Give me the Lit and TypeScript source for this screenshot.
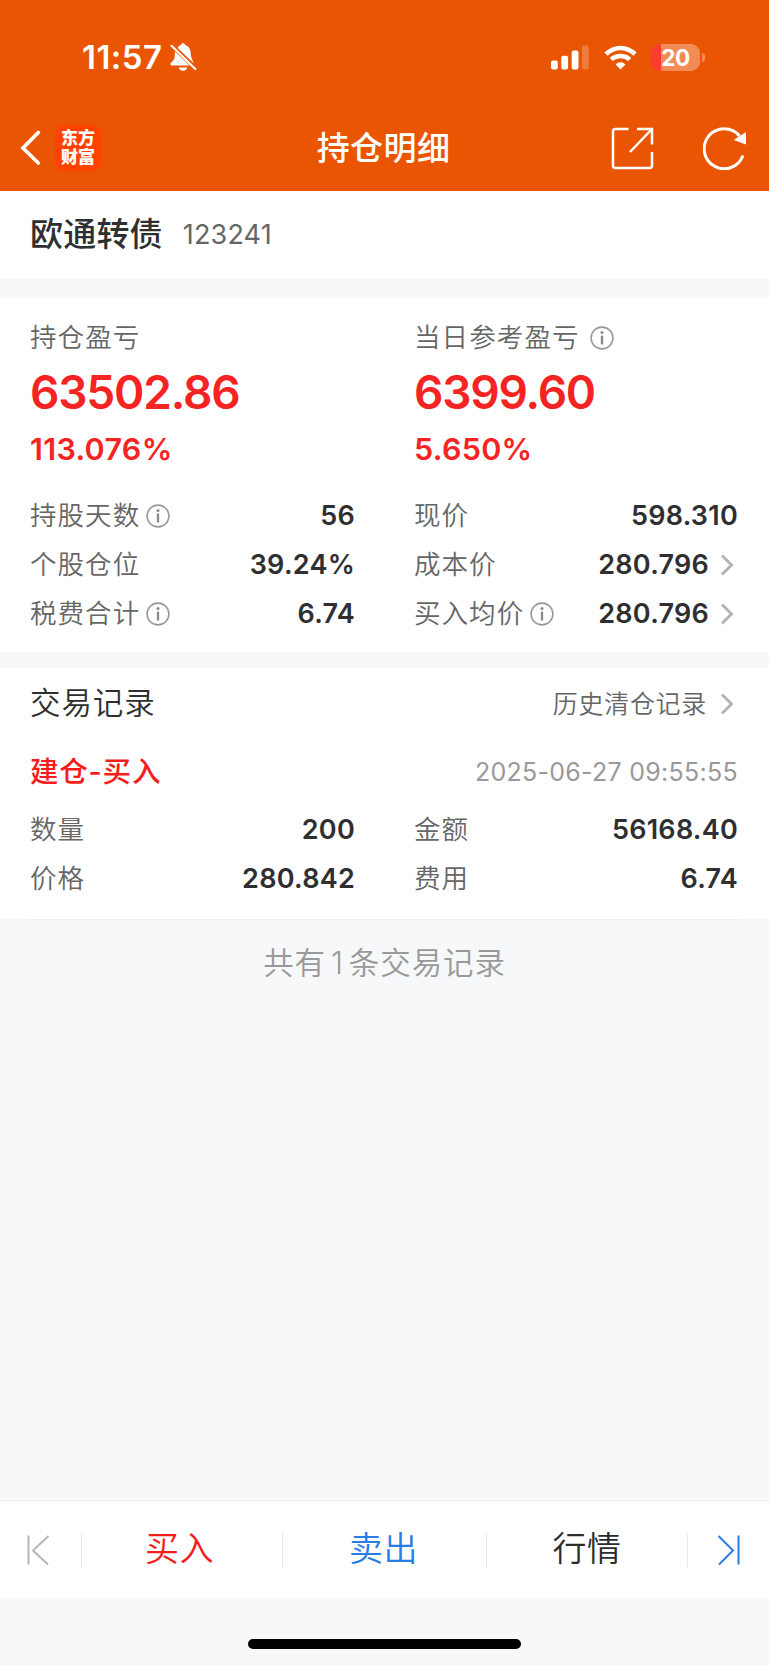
import { LitElement, html, css, svg, nothing } from "lit";
import { customElement, property } from "lit/decorators.js";

const base = css`
  * { box-sizing: border-box; }
  svg { display: block; flex: none; }
`;

@customElement("status-bar")
class StatusBar extends LitElement {
  static styles = [base, css`
    :host { display: flex; align-items: center; height: 76px; padding: 38px 64px 0 82px; justify-content: space-between; color: #fff; }
    .side { display: flex; align-items: center; height: 38px; }
    .time { font-size: 33px; line-height: 38px; font-weight: 600; letter-spacing: 0.450px; width: 88px; white-space: nowrap; }
    .signal { margin-right: 15px; }
    .wifi { margin-right: 14px; }
    .battery { display: flex; align-items: center; }
    .cell { width: 49px; height: 27px; border-radius: 9px; background: linear-gradient(90deg, #ff3b30 10px, #f28b55 10px); font-size: 22.500px; line-height: 27px; font-weight: 700; text-align: center; letter-spacing: -0.300px; }
    .nub { width: 3px; height: 9px; margin-left: 2px; border-radius: 0 4px 4px 0; background: #f28b55; }
  `];
  render() {
    return html`
      <div class="side">
        <span class="time">11:57</span>
        <svg width="27" height="29" viewBox="0 0 27 29" fill="#fff">
          <path d="M6.900 6.100C8 3.800 9.200 2.600 10.900 2.100C11.200.9 12 .3 13 .3s1.800.6 2.100 1.800c3.700 1.100 5.400 4.200 5.600 8.100.2 3.300.7 5 3.600 10.600Z"/>
          <path d="M5 8.500L19.500 22.500H1.800c-.9 0-1.400-.5-1.400-1.200 0-2 3.600-3.600 4.200-6.600.3-1.500.2-4.400.4-6.200Z"/>
          <path d="M8.500 24.400h9c-.6 2-2.300 3.300-4.500 3.300s-3.900-1.300-4.500-3.300Z"/>
          <path d="M3.500 2.200L26.500 24.700" stroke="#ea5504" stroke-width="2"/>
          <path d="M1.500 2.800L25.300 26" stroke="#fff" stroke-width="2.200" stroke-linecap="round"/>
        </svg>
      </div>
      <div class="side">
        <svg class="signal" width="38" height="25" viewBox="0 0 38 25" fill="#fff">
          <rect x="0" y="15.500" width="6.800" height="9" rx="2"/>
          <rect x="10.300" y="10.800" width="6.800" height="13.700" rx="2"/>
          <rect x="20.700" y="5.500" width="6.800" height="19" rx="2"/>
          <rect x="31" y=".5" width="6.800" height="24" rx="2" opacity=".22"/>
        </svg>
        <svg class="wifi" width="33" height="25" viewBox="0 0 33 25">
          <path d="M2 9.200Q8.300 3 16.500 3T31 9.200" fill="none" stroke="#fff" stroke-width="4.600"/>
          <path d="M7.200 14.500Q11 11 16.500 11T25.800 14.500" fill="none" stroke="#fff" stroke-width="4.400"/>
          <path d="M11.600 19.500Q13.500 17.300 16.500 17.300T21.400 19.500L16.500 24.500Z" fill="#fff"/>
        </svg>
        <div class="battery"><div class="cell">20</div><div class="nub"></div></div>
      </div>`;
  }
}

@customElement("nav-bar")
class NavBar extends LitElement {
  static styles = [base, css`
    :host { display: grid; grid-template-columns: 1fr auto 1fr; align-items: center; height: 115px; padding: 29px 22px 0 20px; color: #fff; }
    .left { display: flex; align-items: center; gap: 14px; }
    .logo { width: 46px; height: 46px; border-radius: 9px; background: #ff4200; padding: 2px 5px 0; text-align: center; word-break: break-all; font: 900 17px/19.200px "Noto Sans CJK SC", sans-serif; }
    .title { font-size: 33px; line-height: 40px; font-weight: 500; letter-spacing: 0.400px; }
    .right { display: flex; align-items: center; justify-content: flex-end; gap: 49px; }
  `];
  render() {
    return html`
      <div class="left">
        <svg width="21" height="36" viewBox="0 0 21 36"><path d="M18.300 2.500L3 18L18.300 33" fill="none" stroke="#fff" stroke-width="3.700" stroke-linecap="round"/></svg>
        <div class="logo">东方财富</div>
      </div>
      <div class="title">持仓明细</div>
      <div class="right">
        <svg width="43" height="43" viewBox="0 0 43 43" fill="none" stroke="#fff" stroke-width="2.500">
          <path d="M17.500 2H4.500Q2 2 2 4.500V38.500Q2 41 4.500 41H38.500Q41 41 41 38.500V25"/>
          <path d="M26 2H41V17.500M41 2L19 25"/>
        </svg>
        <svg width="44" height="44" viewBox="0 0 44 44">
          <path d="M40 29.500A20 20 0 1 1 36.600 10" fill="none" stroke="#fff" stroke-width="3"/>
          <path d="M43 6V18.500L30.700 14Z" fill="#fff"/>
        </svg>
      </div>`;
  }
}

const infoIcon = svg`<svg class="info" width="24" height="24" viewBox="0 0 24 24"><circle cx="12" cy="12" r="10.900" fill="none" stroke="#999" stroke-width="1.600"/><circle cx="12" cy="6.500" r="1.500" fill="#888"/><path d="M12 9.600V18.500" stroke="#888" stroke-width="2.300"/></svg>`;
const chevron = svg`<svg class="chev" width="14" height="24" viewBox="0 0 14 24"><path d="M2 2.500L11.500 12L2 21.500" fill="none" stroke="#b2b2b2" stroke-width="2.800"/></svg>`;

@customElement("data-row")
class DataRow extends LitElement {
  @property() label = "";
  @property() value = "";
  @property({ type: Boolean }) info = false;
  @property({ type: Boolean }) link = false;
  static styles = [base, css`
    :host { display: flex; align-items: center; height: 49px; color: #2f2f31; }
    .label { color: #666; font-size: 26.500px; font-weight: 350; letter-spacing: 1.050px; }
    .info { margin: 1px 0 0 6px; }
    .value { margin: 2px 0 0 auto; font-size: 27px; font-weight: 600; letter-spacing: 0.250px; }
    .chev { margin: 0 4px 0 11px; }
  `];
  render() {
    return html`<span class="label">${this.label}</span>${this.info ? infoIcon : nothing}<span class="value">${this.value}</span>${this.link ? chevron : nothing}`;
  }
}

@customElement("profit-block")
class ProfitBlock extends LitElement {
  @property() label = "";
  @property() amount = "";
  @property() percent = "";
  @property({ type: Boolean }) info = false;
  static styles = [base, css`
    :host { display: block; color: #f62323; white-space: nowrap; }
    .label { display: flex; align-items: center; height: 38px; color: #666; font-size: 26.500px; font-weight: 350; letter-spacing: 1.100px; }
    .info { margin-left: 10px; }
    .amount { font-size: 46px; line-height: 70px; font-weight: 600; letter-spacing: -1.200px; }
    .percent { font-size: 30.500px; line-height: 44px; font-weight: 600; letter-spacing: 0.300px; }
  `];
  render() {
    return html`<div class="label">${this.label}${this.info ? infoIcon : nothing}</div>
      <div class="amount">${this.amount}</div><div class="percent">${this.percent}</div>`;
  }
}

@customElement("action-bar")
class ActionBar extends LitElement {
  static styles = [base, css`
    :host { display: grid; grid-template-columns: 82px 201px 204px 201px 81px; align-items: center; height: 98px; background: #fff; border-top: 1px solid #eeeff1; }
    .cell { display: flex; align-items: center; justify-content: center; height: 34px; border-right: 1px solid #e8e8e8; font-size: 34px; font-weight: 350; letter-spacing: 0.500px; }
    .cell:last-child { border: 0; padding-left: 1px; }
    .buy { color: #f61d1d; padding-right: 5px; }
    .sell { color: #2b7de6; padding-right: 2px; }
    .quote { color: #2c2c2e; }
    .first { padding-right: 6px; }
  `];
  render() {
    return html`
      <div class="cell first"><svg width="24" height="32" viewBox="0 0 24 32" fill="none" stroke="#b7b7b7" stroke-width="2"><path d="M2.500 1.500V30.500M22.500 2L7 16.500L22 30.500"/></svg></div>
      <div class="cell buy">买入</div>
      <div class="cell sell">卖出</div>
      <div class="cell quote">行情</div>
      <div class="cell"><svg width="24" height="32" viewBox="0 0 24 32" fill="none" stroke="#2b7de6" stroke-width="2"><path d="M21.500 1.500V30.500M1.500 2L16 16.500L2 30.500"/></svg></div>`;
  }
}

@customElement("app-root")
class AppRoot extends LitElement {
  static styles = [base, css`
    :host { display: flex; flex-direction: column; width: 769px; height: 1665px; overflow: hidden; background: #f7f8fa; color: #2f2f31; font-family: Inter, "Noto Sans CJK SC", sans-serif; line-height: 1.2; }
    .head { height: 191px; background: #ea5504; }
    .name { display: flex; align-items: center; height: 88px; padding: 0 30px; background: #fff; }
    .bond { font-size: 33px; font-weight: 500; letter-spacing: 0.200px; }
    .code { margin-left: 20px; font-size: 27px; color: #666; letter-spacing: 0.150px; }
    .card { background: #fff; padding: 0 31px 0 30px; }
    .summary { margin-top: 19px; height: 354px; padding-top: 21px; }
    .cols { display: grid; grid-template-columns: 325px 324px; column-gap: 59px; }
    .rows { margin-top: 20px; }
    .records { margin-top: 16px; height: 251px; }
    .bar { display: flex; align-items: center; justify-content: space-between; height: 71px; }
    h2 { margin: 0; font-size: 30.500px; font-weight: 350; letter-spacing: 0.900px; }
    .history { display: flex; align-items: center; font-size: 25px; color: #666; font-weight: 350; letter-spacing: 0.700px; }
    .chev { margin: 0 4px 0 13px; }
    .trade { height: 66px; }
    .kind { font-size: 28.500px; font-weight: 500; color: #f61d1d; letter-spacing: 0.800px; }
    .date { font-size: 25px; color: #999; letter-spacing: 0.280px; }
    .line { flex: none; height: 1px; margin: 0 31px 0 29px; background: #eee; }
    .total { height: 86px; line-height: 86px; text-align: center; font-size: 30.500px; font-weight: 350; letter-spacing: 0.900px; color: #999; }
    .count { margin: 0 5px; }
    .grow { flex: 1; }
    .home { height: 67px; display: flex; justify-content: center; padding-top: 41px; }
    .pill { width: 273px; height: 10px; border-radius: 5px; background: #000; }
  `];
  render() {
    return html`
      <div class="head"><status-bar></status-bar><nav-bar></nav-bar></div>
      <div class="name"><span class="bond">欧通转债</span><span class="code">123241</span></div>
      <div class="card summary">
        <div class="cols">
          <profit-block label="持仓盈亏" amount="63502.86" percent="113.076%"></profit-block>
          <profit-block label="当日参考盈亏" amount="6399.60" percent="5.650%" info></profit-block>
        </div>
        <div class="cols rows">
          <data-row label="持股天数" value="56" info></data-row>
          <data-row label="现价" value="598.310"></data-row>
          <data-row label="个股仓位" value="39.24%"></data-row>
          <data-row label="成本价" value="280.796" link></data-row>
          <data-row label="税费合计" value="6.74" info></data-row>
          <data-row label="买入均价" value="280.796" info link></data-row>
        </div>
      </div>
      <div class="card records">
        <div class="bar"><h2>交易记录</h2><div class="history">历史清仓记录${chevron}</div></div>
        <div class="bar trade"><span class="kind">建仓-买入</span><span class="date">2025-06-27 09:55:55</span></div>
        <div class="cols">
          <data-row label="数量" value="200"></data-row>
          <data-row label="金额" value="56168.40"></data-row>
          <data-row label="价格" value="280.842"></data-row>
          <data-row label="费用" value="6.74"></data-row>
        </div>
      </div>
      <div class="line"></div>
      <div class="total">共有<span class="count">1</span>条交易记录</div>
      <div class="grow"></div>
      <action-bar></action-bar>
      <div class="home"><div class="pill"></div></div>`;
  }
}
